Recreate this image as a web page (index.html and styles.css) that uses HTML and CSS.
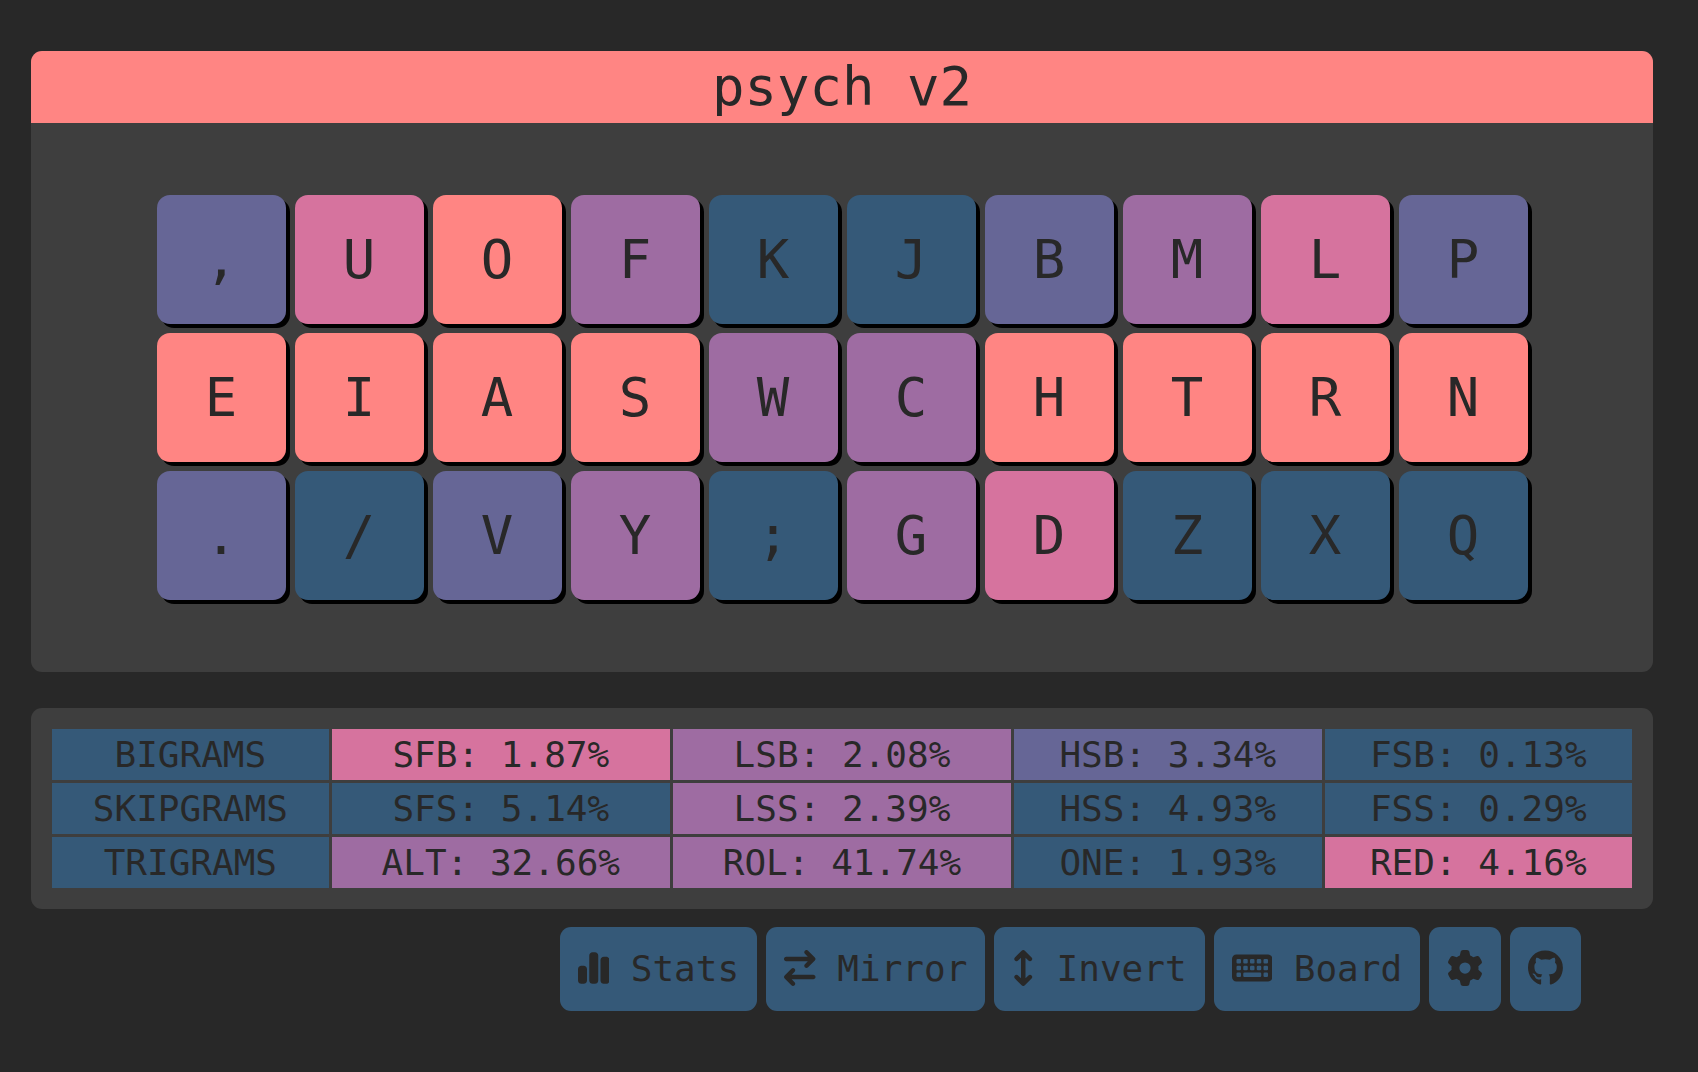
FILE: index.html
```html
<!DOCTYPE html>
<html lang="en">
<head>
<meta charset="utf-8">
<meta name="viewport" content="width=device-width, initial-scale=1">
<title>psych v2</title>
<link rel="stylesheet" href="styles.css">
</head>
<body>
<main class="page">
  <section class="board">
    <h1 class="board-title">psych v2</h1>
    <div class="keys">
      <div class="key heat-2">,</div>
      <div class="key heat-4">U</div>
      <div class="key heat-5">O</div>
      <div class="key heat-3">F</div>
      <div class="key heat-1">K</div>
      <div class="key heat-1">J</div>
      <div class="key heat-2">B</div>
      <div class="key heat-3">M</div>
      <div class="key heat-4">L</div>
      <div class="key heat-2">P</div>
      <div class="key heat-5">E</div>
      <div class="key heat-5">I</div>
      <div class="key heat-5">A</div>
      <div class="key heat-5">S</div>
      <div class="key heat-3">W</div>
      <div class="key heat-3">C</div>
      <div class="key heat-5">H</div>
      <div class="key heat-5">T</div>
      <div class="key heat-5">R</div>
      <div class="key heat-5">N</div>
      <div class="key heat-2">.</div>
      <div class="key heat-1">/</div>
      <div class="key heat-2">V</div>
      <div class="key heat-3">Y</div>
      <div class="key heat-1">;</div>
      <div class="key heat-3">G</div>
      <div class="key heat-4">D</div>
      <div class="key heat-1">Z</div>
      <div class="key heat-1">X</div>
      <div class="key heat-1">Q</div>
    </div>
  </section>

  <section class="stats">
    <table class="stats-table">
      <tbody>
        <tr>
          <th scope="row" class="heat-1">BIGRAMS</th>
          <td class="heat-4">SFB: 1.87%</td>
          <td class="heat-3">LSB: 2.08%</td>
          <td class="heat-2">HSB: 3.34%</td>
          <td class="heat-1">FSB: 0.13%</td>
        </tr>
        <tr>
          <th scope="row" class="heat-1">SKIPGRAMS</th>
          <td class="heat-1">SFS: 5.14%</td>
          <td class="heat-3">LSS: 2.39%</td>
          <td class="heat-1">HSS: 4.93%</td>
          <td class="heat-1">FSS: 0.29%</td>
        </tr>
        <tr>
          <th scope="row" class="heat-1">TRIGRAMS</th>
          <td class="heat-3">ALT: 32.66%</td>
          <td class="heat-3">ROL: 41.74%</td>
          <td class="heat-1">ONE: 1.93%</td>
          <td class="heat-4">RED: 4.16%</td>
        </tr>
      </tbody>
    </table>
  </section>

  <nav class="toolbar">
    <button type="button" class="tool"><svg class="icon" viewBox="0 0 448 512" aria-hidden="true"><path d="M160 80c0-26.5 21.5-48 48-48h32c26.5 0 48 21.5 48 48V432c0 26.5-21.5 48-48 48H208c-26.5 0-48-21.5-48-48V80zM0 272c0-26.5 21.5-48 48-48H80c26.5 0 48 21.5 48 48V432c0 26.5-21.5 48-48 48H48c-26.5 0-48-21.5-48-48V272zM368 96h32c26.5 0 48 21.5 48 48V432c0 26.5-21.5 48-48 48H368c-26.5 0-48-21.5-48-48V144c0-26.5 21.5-48 48-48z"/></svg> Stats</button>
    <button type="button" class="tool"><svg class="icon" viewBox="0 0 448 512" aria-hidden="true"><path d="M438.6 150.6c12.5-12.5 12.5-32.8 0-45.3l-96-96c-12.5-12.5-32.8-12.5-45.3 0s-12.5 32.8 0 45.3L338.7 96 32 96C14.3 96 0 110.3 0 128s14.3 32 32 32l306.7 0-41.4 41.4c-12.5 12.5-12.5 32.8 0 45.3s32.8 12.5 45.3 0l96-96zm-333.3 352c12.5 12.5 32.8 12.5 45.3 0s12.5-32.8 0-45.3L109.3 416 416 416c17.7 0 32-14.3 32-32s-14.3-32-32-32l-306.7 0 41.4-41.4c12.5-12.5 12.5-32.8 0-45.3s-32.8-12.5-45.3 0l-96 96c-12.5 12.5-12.5 32.8 0 45.3l96 96z"/></svg> Mirror</button>
    <button type="button" class="tool"><svg class="icon" viewBox="0 0 320 512" aria-hidden="true"><path d="M182.6 9.4c-12.5-12.5-32.8-12.5-45.3 0l-96 96c-12.5 12.5-12.5 32.8 0 45.3s32.8 12.5 45.3 0L128 109.3V402.7L86.6 361.4c-12.5-12.5-32.8-12.5-45.3 0s-12.5 32.8 0 45.3l96 96c12.5 12.5 32.8 12.5 45.3 0l96-96c12.5-12.5 12.5-32.8 0-45.3s-32.8-12.5-45.3 0L192 402.7V109.3l41.4 41.4c12.5 12.5 32.8 12.5 45.3 0s12.5-32.8 0-45.3l-96-96z"/></svg> Invert</button>
    <button type="button" class="tool"><svg class="icon" viewBox="0 0 576 512" aria-hidden="true"><path fill-rule="evenodd" d="M64 64C28.7 64 0 92.7 0 128V384c0 35.3 28.7 64 64 64H512c35.3 0 64-28.7 64-64V128c0-35.3-28.7-64-64-64H64zM80 128h32a16 16 0 0 1 16 16v32a16 16 0 0 1-16 16H80a16 16 0 0 1-16-16v-32a16 16 0 0 1 16-16zM176 128h32a16 16 0 0 1 16 16v32a16 16 0 0 1-16 16h-32a16 16 0 0 1-16-16v-32a16 16 0 0 1 16-16zM272 128h32a16 16 0 0 1 16 16v32a16 16 0 0 1-16 16h-32a16 16 0 0 1-16-16v-32a16 16 0 0 1 16-16zM368 128h32a16 16 0 0 1 16 16v32a16 16 0 0 1-16 16h-32a16 16 0 0 1-16-16v-32a16 16 0 0 1 16-16zM464 128h32a16 16 0 0 1 16 16v32a16 16 0 0 1-16 16h-32a16 16 0 0 1-16-16v-32a16 16 0 0 1 16-16zM80 224h32a16 16 0 0 1 16 16v32a16 16 0 0 1-16 16H80a16 16 0 0 1-16-16v-32a16 16 0 0 1 16-16zM176 224h32a16 16 0 0 1 16 16v32a16 16 0 0 1-16 16h-32a16 16 0 0 1-16-16v-32a16 16 0 0 1 16-16zM272 224h32a16 16 0 0 1 16 16v32a16 16 0 0 1-16 16h-32a16 16 0 0 1-16-16v-32a16 16 0 0 1 16-16zM368 224h32a16 16 0 0 1 16 16v32a16 16 0 0 1-16 16h-32a16 16 0 0 1-16-16v-32a16 16 0 0 1 16-16zM464 224h32a16 16 0 0 1 16 16v32a16 16 0 0 1-16 16h-32a16 16 0 0 1-16-16v-32a16 16 0 0 1 16-16zM80 320h32a16 16 0 0 1 16 16v32a16 16 0 0 1-16 16H80a16 16 0 0 1-16-16v-32a16 16 0 0 1 16-16zM176 320h224a16 16 0 0 1 16 16v32a16 16 0 0 1-16 16H176a16 16 0 0 1-16-16v-32a16 16 0 0 1 16-16zM464 320h32a16 16 0 0 1 16 16v32a16 16 0 0 1-16 16h-32a16 16 0 0 1-16-16v-32a16 16 0 0 1 16-16z"/></svg> Board</button>
    <button type="button" class="tool" aria-label="Settings"><svg class="icon" viewBox="0 0 512 512" aria-hidden="true"><path d="M495.9 166.6c3.2 8.7 .5 18.4-6.4 24.6l-43.3 39.4c1.1 8.3 1.7 16.8 1.7 25.4s-.6 17.1-1.7 25.4l43.3 39.4c6.9 6.2 9.6 15.9 6.4 24.6c-4.4 11.9-9.7 23.3-15.8 34.3l-4.7 8.1c-6.6 11-14 21.4-22.1 31.2c-5.9 7.2-15.7 9.6-24.5 6.8l-55.7-17.7c-13.4 10.3-28.2 18.9-44 25.4l-12.5 57.1c-2 9.1-9 16.3-18.2 17.8c-13.8 2.3-28 3.5-42.5 3.5s-28.7-1.2-42.5-3.5c-9.2-1.5-16.2-8.7-18.2-17.8l-12.5-57.1c-15.8-6.5-30.6-15.1-44-25.4L83.1 425.9c-8.8 2.8-18.6 .3-24.5-6.8c-8.1-9.8-15.5-20.2-22.1-31.2l-4.7-8.1c-6.1-11-11.4-22.4-15.8-34.3c-3.2-8.7-.5-18.4 6.4-24.6l43.3-39.4C64.6 273.1 64 264.6 64 256s.6-17.1 1.7-25.4L22.4 191.2c-6.9-6.2-9.6-15.9-6.4-24.6c4.4-11.9 9.7-23.3 15.8-34.3l4.7-8.1c6.6-11 14-21.4 22.1-31.2c5.9-7.2 15.7-9.6 24.5-6.8l55.7 17.7c13.4-10.3 28.2-18.9 44-25.4l12.5-57.1c2-9.1 9-16.3 18.2-17.8C227.3 1.2 241.5 0 256 0s28.7 1.2 42.5 3.5c9.2 1.5 16.2 8.7 18.2 17.8l12.5 57.1c15.8 6.5 30.6 15.1 44 25.4l55.7-17.7c8.8-2.8 18.6-.3 24.5 6.8c8.1 9.8 15.5 20.2 22.1 31.2l4.7 8.1c6.1 11 11.4 22.4 15.8 34.3zM256 336a80 80 0 1 0 0-160 80 80 0 1 0 0 160z"/></svg></button>
    <a class="tool" href="https://github.com" aria-label="GitHub"><svg class="icon" viewBox="0 0 496 512" aria-hidden="true"><path d="M244.8 8C106.1 8 0 113.3 0 252c0 110.9 69.8 205.8 169.5 239.2 12.8 2.3 17.3-5.6 17.3-12.1 0-6.2-.3-40.4-.3-61.4 0 0-70 15-84.7-29.8 0 0-11.4-29.1-27.8-36.6 0 0-22.9-15.7 1.6-15.4 0 0 24.9 2 38.6 25.8 21.9 38.6 58.6 27.5 72.9 20.9 2.3-16 8.8-27.1 16-33.7-55.9-6.2-112.3-14.3-112.3-110.5 0-27.5 7.6-41.3 23.6-58.9-2.6-6.5-11.1-33.3 2.6-67.9 20.9-6.5 69 27 69 27 20-5.6 41.5-8.5 62.8-8.5s42.8 2.9 62.8 8.5c0 0 48.1-33.6 69-27 13.7 34.7 5.2 61.4 2.6 67.9 16 17.7 25.8 31.5 25.8 58.9 0 96.5-58.9 104.2-114.8 110.5 9.2 7.9 17 22.9 17 46.4 0 33.7-.3 75.4-.3 83.6 0 6.5 4.6 14.4 17.3 12.1C428.2 457.8 496 362.9 496 252 496 113.3 383.5 8 244.8 8z"/></svg></a>
  </nav>
</main>
</body>
</html>
```
FILE: styles.css
```css
:root {
  --bg: #282828;
  --panel: #3e3e3e;
  --heat-1: #355978;
  --heat-2: #666696;
  --heat-3: #9e6ca2;
  --heat-4: #d6739e;
  --heat-5: #ff8583;
}

* {
  box-sizing: border-box;
}

body {
  margin: 0;
  background: var(--bg);
  color: var(--bg);
  font-family: "DejaVu Sans Mono", monospace;
  font-size: 36px;
}

.page {
  padding: 51px 45px 60px 31px;
}

.heat-1 { background: var(--heat-1); }
.heat-2 { background: var(--heat-2); }
.heat-3 { background: var(--heat-3); }
.heat-4 { background: var(--heat-4); }
.heat-5 { background: var(--heat-5); }

.board {
  overflow: hidden;
  border-radius: 11px;
  background: var(--panel);
}

.board-title {
  margin: 0;
  background: var(--heat-5);
  font-size: 54px;
  font-weight: 400;
  line-height: 72px;
  text-align: center;
}

.keys {
  display: grid;
  grid-template-columns: repeat(10, minmax(0, 129px));
  gap: 9px;
  justify-content: center;
  padding: 72px 18px;
}

.key {
  display: flex;
  align-items: center;
  justify-content: center;
  aspect-ratio: 1;
  border-radius: 13px;
  box-shadow: 4px 4px 0 #000;
  font-size: 54px;
  line-height: 60px;
}

.stats {
  margin-top: 36px;
  padding: 18px;
  border-radius: 11px;
  background: var(--panel);
}

.stats-table {
  width: 100%;
  border-spacing: 3px;
}

.stats-table th,
.stats-table td {
  padding: 0;
  font-weight: 400;
  line-height: 51px;
  text-align: center;
  white-space: nowrap;
}

.toolbar {
  display: flex;
  flex-wrap: wrap;
  justify-content: flex-end;
  gap: 9px;
  margin-top: 18px;
  padding-right: 72px;
}

.tool {
  padding: 18px;
  border: 0;
  border-radius: 11px;
  background: var(--heat-1);
  color: inherit;
  font: inherit;
  line-height: 48px;
  text-decoration: none;
  white-space: nowrap;
  cursor: pointer;
}

.icon {
  height: 36px;
  fill: currentColor;
  vertical-align: -5px;
}
```
